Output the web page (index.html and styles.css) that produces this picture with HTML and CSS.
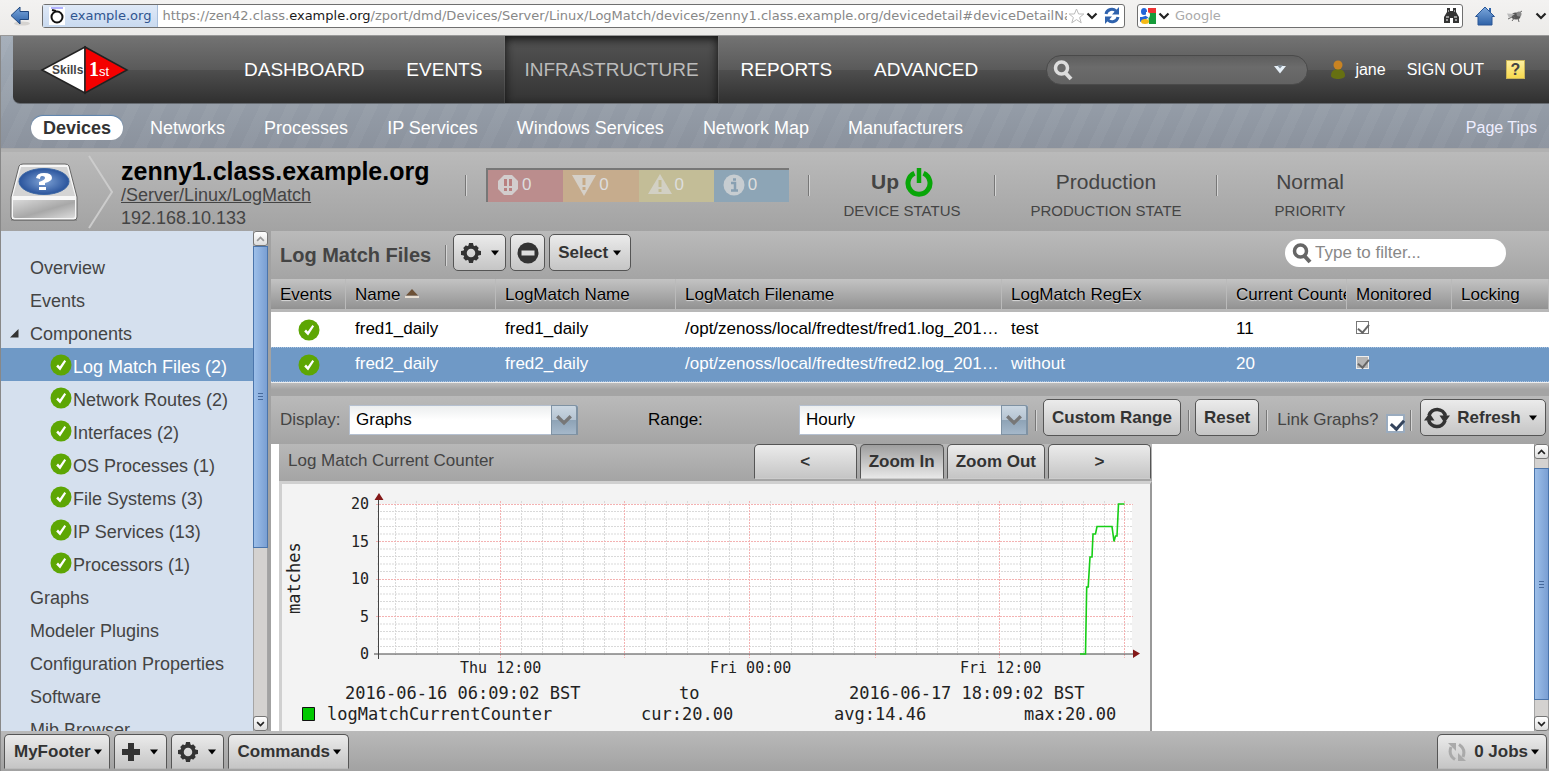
FILE: index.html
```html
<!DOCTYPE html>
<html lang="en">
<head>
<meta charset="utf-8">
<title>zenny1.class.example.org</title>
<link rel="stylesheet" href="styles.css">
</head>
<body>
<svg width="0" height="0" class="defs" aria-hidden="true">
  <defs>
    <linearGradient id="blue" x1="0" y1="0" x2="0" y2="1"><stop offset="0" stop-color="#7ba7dc"/><stop offset="1" stop-color="#2e62a8"/></linearGradient>
    <radialGradient id="disc"><stop offset="0" stop-color="#7fa3d6"/><stop offset="1" stop-color="#2a549c"/></radialGradient>
    <linearGradient id="front" x1="0" y1="0" x2="1" y2="1"><stop offset="0" stop-color="#d9d9d9"/><stop offset="0.55" stop-color="#a8a8a8"/><stop offset="1" stop-color="#dcdcdc"/></linearGradient>
    <symbol id="ok" viewBox="0 0 22 22"><circle cx="11" cy="11" r="10.5" fill="#5da604"/><path d="M6.2 12.4 8 10.600l1.800 1.900 4.600-6.400 1.700 1.100-6 9.300z" fill="#fff"/></symbol>
    <symbol id="gear" viewBox="0 0 22 22"><g fill="#333"><path d="M9 1h4l.6 3h-5.2zM9 21h4l.6-3h-5.2zM1 9v4l3 .6V8.400zM21 9v4l-3 .6V8.400z"/><path d="m3.200 5.900 2.700-2.700 2.600 1.700-3.600 3.600zM18.800 5.900l-2.700-2.700-2.600 1.700 3.600 3.600zM3.200 16.100l2.700 2.700 2.600-1.700-3.600-3.600zM18.800 16.100l-2.700 2.700-2.600-1.700 3.600-3.600z"/></g><circle cx="11" cy="11" r="6" fill="none" stroke="#333" stroke-width="3.500"/></symbol>
    <symbol id="lens" viewBox="0 0 22 22"><circle cx="9.500" cy="9" r="6" fill="none" stroke="currentColor" stroke-width="3.500"/><path d="m13.500 14 5.500 6" stroke="currentColor" stroke-width="4"/></symbol>
    <symbol id="caret" viewBox="0 0 10 6"><path d="M1 .5h8L5 5.500z" fill="#000"/></symbol>
    <symbol id="chev" viewBox="0 0 12 8"><path d="m1.500 1.500 4.500 4.500 4.500-4.500" fill="none" stroke="currentColor" stroke-width="2.200"/></symbol>
    <symbol id="cycle" viewBox="0 0 26 22"><path d="M5 8.500A8.500 8.500 0 0 1 21.400 9M21 13.500A8.500 8.500 0 0 1 4.600 13" fill="none" stroke="currentColor" stroke-width="3.600"/><path d="M0 13.500 5.500 6l5 7.500zM26 8.500 20.500 16l-5-7.500z" fill="currentColor"/></symbol>
  </defs>
</svg>

<div class="browser">
  <button class="plain back" aria-label="Back"><svg width="20" height="20" viewBox="0 0 20 20"><ellipse cx="12" cy="17.500" rx="8" ry="2" fill="#d5d3d0"/><path d="M1 9.500 10 1v4.500h8.500v8H10V18z" fill="url(#blue)" stroke="#1f477f"/></svg></button>
  <div class="address">
    <span class="site"><svg width="16" height="18" viewBox="0 0 16 18"><path d="M0 0h16v18H0z" fill="#fff"/><path d="M2 1h12" stroke="#66f"/><circle cx="8" cy="10" r="5.500" fill="none" stroke="#111" stroke-width="2"/><path d="m3 3 4 1" stroke="#111" stroke-width="2"/></svg>example.org</span>
    <span class="url">https://zen42.class.<b>example.org</b>/zport/dmd/Devices/Server/Linux/LogMatch/devices/zenny1.class.example.org/devicedetail#deviceDetailNav</span>
    <svg width="17" height="16" viewBox="0 0 17 16"><path d="m8.500 1 2.100 5h5.200l-4.200 3.500 1.600 5.300-4.700-3.200-4.700 3.200 1.600-5.300L1.200 6h5.200z" fill="#fff" stroke="#bbb"/></svg>
    <svg class="dark" width="12" height="8"><use href="#chev"/></svg>
    <svg class="reload" width="16" height="17" viewBox="0 0 16 17"><path d="M2 7C3 2 9 1 12 4M14 10c-1 5-7 6-10 3" fill="none" stroke="#2f62ad" stroke-width="3"/><path d="M15 0v7.500H8zM1 17V9.500h7z" fill="#2f62ad"/></svg>
  </div>
  <div class="websearch">
    <svg width="16" height="16" viewBox="0 0 16 16"><path d="M8 0h8v5H8z" fill="#e33"/><path d="M8 5h8v11H9z" fill="#169b3a"/><ellipse cx="4" cy="3.500" rx="3" ry="3.500" fill="#2465d8"/><path d="M0 9h2l6-2v3l-6 3-2 1z" fill="#2465d8"/><path d="M6 4c4 0 5 2 3 6L6 8z" fill="#fff"/><ellipse cx="5" cy="13.500" rx="4" ry="2.500" fill="#f5b915"/></svg>
    <svg class="dark" width="12" height="8"><use href="#chev"/></svg>
    <input type="text" placeholder="Google" aria-label="Web search">
    <svg width="17" height="16" viewBox="0 0 17 16"><path d="M4 0h3v3h3V0h3v4l3 5v6h-6v-5H7v5H1V9l3-5z" fill="#333"/><path d="M3 9h3M11 9h3M3 12h2M12 12h2M5 3h1M11 3h1" stroke="#bbb" stroke-width="1.500"/></svg>
  </div>
  <svg width="20" height="20" viewBox="0 0 20 20"><path d="M14 2h2v4h-2z" fill="#2e62a8"/><path d="m10 1 9.500 9.500H17V19H3v-8.500H.500z" fill="url(#blue)" stroke="#2b5796"/></svg>
  <svg class="fly" width="16" height="16" viewBox="0 0 16 16"><ellipse cx="9" cy="8" rx="4.500" ry="3.500" fill="#555"/><path d="m1 11 6-3M5 13l3-4M12 5l3-2M11 10l1 4" stroke="#666"/><path d="M0 5.500 8 6l-6 4z" fill="#bbb"/><circle cx="12" cy="6" r="2.500" fill="#888"/></svg>
  <svg class="dark" width="12" height="8"><use href="#chev"/></svg>
</div>

<div class="app">
<header class="top">
  <div class="mainbar">
    <svg class="logo" width="90" height="50" viewBox="0 0 90 50"><path d="M2 25 45 2v46z" fill="#fff" stroke="#222" stroke-width="1.500"/><path d="M45 2 87 25 45 48z" fill="#f40000" stroke="#222" stroke-width="1.500"/><text x="12" y="29" class="logo-a">Skills</text><text x="49" y="31" class="logo-b">1</text><text x="59" y="31" class="logo-c">st</text></svg>
    <nav class="primary">
      <a href="#">DASHBOARD</a><a href="#">EVENTS</a><a href="#" class="current">INFRASTRUCTURE</a><a href="#">REPORTS</a><a href="#">ADVANCED</a>
    </nav>
    <div class="globalsearch">
      <svg width="22" height="22"><use href="#lens"/></svg>
      <input type="text" aria-label="Search">
      <svg width="12" height="9" viewBox="0 0 12 9"><path d="M0 1h12L6 8.500z" fill="#e6f0f8"/><path d="m3 0 3 3.500L9 0z" fill="#7f8a94"/></svg>
    </div>
    <svg class="person" width="16" height="20" viewBox="0 0 16 20"><path d="M1 16c0-5 3-7 7-7s7 2 7 7c-1 4-13 4-14 0z" fill="#667012"/><circle cx="8" cy="5" r="4.500" fill="#c98322"/></svg>
    <a href="#" class="user">jane</a>
    <a href="#" class="signout">SIGN OUT</a>
    <button class="plain help" aria-label="Help">?</button>
  </div>
  <nav class="secondary">
    <a href="#" class="current">Devices</a><a href="#">Networks</a><a href="#">Processes</a><a href="#">IP Services</a><a href="#">Windows Services</a><a href="#">Network Map</a><a href="#">Manufacturers</a>
    <a href="#" class="tips">Page Tips</a>
  </nav>
</header>

<section class="device">
  <svg class="drive" width="76" height="60" viewBox="0 0 76 60"><path d="M5 54h66v4H5z" fill="#8d8d8d"/><path d="M13 3Q14 1 17 1h42q3 0 4 2l8 31v20q0 3-3 3H8q-3 0-3-3V34z" fill="#f7f7f7" stroke="#666"/><path d="M15 4h46l8 29H7z" fill="#d4d4d4"/><path d="M7 37h62v16q0 2-2 2H9q-2 0-2-2z" fill="url(#front)"/><ellipse cx="38" cy="18.500" rx="25" ry="13" fill="url(#disc)" stroke="#3b66a4"/><path d="M30 15q1-5 8-5 8 0 8 5 0 3-7 5v2h-6v-3q6-2 6-4 0-2-3-2-2 0-2 3zM33 24h7v3h-7z" fill="#fff"/></svg>
  <svg class="arrow" width="26" height="74" viewBox="0 0 26 74"><path d="M1 1 24 37 1 73" fill="none" stroke="#ccc" stroke-width="2"/></svg>
  <div class="identity">
    <h1>zenny1.class.example.org</h1>
    <a href="#">/Server/Linux/LogMatch</a>
    <div>192.168.10.133</div>
  </div>
  <i class="rule"></i>
  <div class="severity">
    <span class="critical"><svg width="22" height="22" viewBox="0 0 22 22"><path d="M7 1h8l6 6v8l-6 6H7l-6-6V7z" fill="#d2cdcd"/><path d="M8.500 5v7M13.500 5v7M8.500 14v3M13.500 14v3" stroke="#b98080" stroke-width="3"/></svg>0</span>
    <span class="error"><svg width="24" height="22" viewBox="0 0 24 22"><path d="M0 1h24L12 22z" fill="#d5d0c8"/><path d="M12 4v7M12 13v3" stroke="#c6a986" stroke-width="3"/></svg>0</span>
    <span class="warning"><svg width="24" height="22" viewBox="0 0 24 22"><path d="M12 0 24 20H0z" fill="#d2d0c4"/><path d="M12 6v7M12 15v3" stroke="#c2bb91" stroke-width="3"/></svg>0</span>
    <span class="info"><svg width="22" height="22" viewBox="0 0 22 22"><circle cx="11" cy="11" r="10.500" fill="#c7cdd1"/><path d="M8 9h4v7M8 16.500h7M10 5.500h3" fill="none" stroke="#88a0b2" stroke-width="2.500"/></svg>0</span>
  </div>
  <i class="rule"></i>
  <div class="fact status"><strong>Up <svg width="28" height="30" viewBox="0 0 28 30"><path d="M9.500 6.200a11 11 0 1 0 9 0" fill="none" stroke="#08a608" stroke-width="5"/><path d="M14 1v15" stroke="#08a608" stroke-width="4.500"/></svg></strong><small>DEVICE STATUS</small></div>
  <i class="rule"></i>
  <div class="fact state"><span>Production</span><small>PRODUCTION STATE</small></div>
  <i class="rule"></i>
  <div class="fact priority"><span>Normal</span><small>PRIORITY</small></div>
</section>

<div class="workspace">
  <nav class="tree">
    <a href="#">Overview</a>
    <a href="#">Events</a>
    <a href="#" class="parent"><svg width="10" height="10" viewBox="0 0 10 10"><path d="M0 8.500 8.500 0v8.500z" fill="#333"/></svg>Components</a>
    <a href="#" class="child selected"><svg width="22" height="22"><use href="#ok"/></svg>Log Match Files (2)</a>
    <a href="#" class="child"><svg width="22" height="22"><use href="#ok"/></svg>Network Routes (2)</a>
    <a href="#" class="child"><svg width="22" height="22"><use href="#ok"/></svg>Interfaces (2)</a>
    <a href="#" class="child"><svg width="22" height="22"><use href="#ok"/></svg>OS Processes (1)</a>
    <a href="#" class="child"><svg width="22" height="22"><use href="#ok"/></svg>File Systems (3)</a>
    <a href="#" class="child"><svg width="22" height="22"><use href="#ok"/></svg>IP Services (13)</a>
    <a href="#" class="child"><svg width="22" height="22"><use href="#ok"/></svg>Processors (1)</a>
    <a href="#">Graphs</a>
    <a href="#">Modeler Plugins</a>
    <a href="#">Configuration Properties</a>
    <a href="#">Software</a>
    <a href="#">Mib Browser</a>
  </nav>
  <div class="scroll tree-scroll">
    <span class="step idle"><svg width="9" height="6" viewBox="0 0 12 8"><path d="m1.500 6.500 4.500-4.500 4.500 4.500" fill="none" stroke="currentColor" stroke-width="2.200"/></svg></span>
    <span class="thumb"></span><span class="rest"></span>
    <span class="step"><svg width="9" height="6"><use href="#chev"/></svg></span>
  </div>

  <main>
    <div class="toolbar list-tools">
      <h2>Log Match Files</h2><i class="rule"></i>
      <button aria-label="Settings"><svg width="22" height="22"><use href="#gear"/></svg><svg width="10" height="6"><use href="#caret"/></svg></button>
      <button aria-label="Delete"><svg width="22" height="22" viewBox="0 0 22 22"><circle cx="11" cy="11" r="10.500" fill="#333"/><path d="M4.500 8.500h13v5h-13z" fill="#ddd"/></svg></button>
      <button>Select<svg width="10" height="6"><use href="#caret"/></svg></button>
      <label class="filter"><svg width="22" height="22"><use href="#lens"/></svg><input type="text" placeholder="Type to filter..." aria-label="Filter"></label>
    </div>
    <table>
      <colgroup><col class="c1"><col class="c2"><col class="c3"><col class="c4"><col class="c5"><col class="c6"><col class="c7"><col></colgroup>
      <thead><tr><th>Events</th><th>Name <svg width="14" height="9" viewBox="0 0 14 9"><path d="M1 6.500 7 0l6 6.500z" fill="#6d5136"/><path d="M0 8h14" stroke="#e8dfd3" stroke-width="2"/></svg></th><th>LogMatch Name</th><th>LogMatch Filename</th><th>LogMatch RegEx</th><th>Current Counter</th><th>Monitored</th><th>Locking</th></tr></thead>
      <tbody>
        <tr><td class="state-icon"><svg width="22" height="22"><use href="#ok"/></svg></td><td>fred1_daily</td><td>fred1_daily</td><td>/opt/zenoss/local/fredtest/fred1.log_201…</td><td>test</td><td>11</td><td><input type="checkbox" checked aria-label="fred1_daily monitored"></td><td></td></tr>
        <tr class="picked"><td class="state-icon"><svg width="22" height="22"><use href="#ok"/></svg></td><td>fred2_daily</td><td>fred2_daily</td><td>/opt/zenoss/local/fredtest/fred2.log_201…</td><td>without</td><td>20</td><td><input type="checkbox" checked aria-label="fred2_daily monitored"></td><td></td></tr>
      </tbody>
    </table>
    <div class="splitter"></div>
    <div class="toolbar graph-tools">
      <label class="display" for="display">Display:</label>
      <span class="combo"><select id="display"><option>Graphs</option></select><span class="trigger"><svg width="18" height="12"><use href="#chev"/></svg></span></span>
      <label class="range" for="range">Range:</label>
      <span class="combo"><select id="range"><option>Hourly</option></select><span class="trigger"><svg width="18" height="12"><use href="#chev"/></svg></span></span>
      <i class="rule"></i><button>Custom Range</button><i class="rule"></i><button>Reset</button><i class="rule"></i>
      <label class="link" for="link">Link Graphs?</label><input class="tick" type="checkbox" id="link" checked><i class="rule"></i>
      <button class="refresh"><svg width="26" height="22"><use href="#cycle"/></svg>Refresh<svg width="10" height="6"><use href="#caret"/></svg></button>
    </div>
    <div class="graphs">
      <section class="graph">
        <div class="graph-head"><h3>Log Match Current Counter</h3>
          <button class="wide">&lt;</button><button class="on">Zoom In</button><button>Zoom Out</button><button class="wide">&gt;</button></div>
        <div class="plot">
          <svg width="868" height="262" viewBox="282 484 868 262" id="chart" role="img" aria-label="Log match counter">
            <path d="M379 504h753v150H379z" fill="#fff"/>
            <path class="minor" d="M377 646.500h755M377 639h755M377 631.500h755M377 624h755M377 609h755M377 601.500h755M377 594h755M377 586.500h755M377 571.500h755M377 564h755M377 556.500h755M377 549h755M377 534h755M377 526.500h755M377 519h755M377 511.500h755"/>
            <path class="minor" d="M395.500 501v154M416.500 501v154M437.500 501v154M458.500 501v154M479.500 501v154M521.500 501v154M542.500 501v154M562.500 501v154M583.500 501v154M604.500 501v154M645.500 501v154M666.500 501v154M687.500 501v154M708.500 501v154M729.500 501v154M770.500 501v154M791.500 501v154M812.500 501v154M833.500 501v154M854.500 501v154M895.500 501v154M916.500 501v154M937.500 501v154M957.500 501v154M978.500 501v154M1020.500 501v154M1041.500 501v154M1062.500 501v154M1083.500 501v154M1104.500 501v154"/>
            <path class="major" d="M376 504.500h757M376 541.500h757M376 579.500h757M376 616.500h757M500.500 501v157M624.500 501v157M749.500 501v157M875.500 501v157M999.500 501v157M1124.500 501v157"/>
            <path d="M378.500 659V498M374 654h760" fill="none" stroke="#444"/>
            <path d="m374.500 500 4.500-7 4.500 7zM1133 649.500l7 4-7 4.500z" fill="#831818"/>
            <path d="M1080 654h5.500l1.200-67h1.500l1.800-30h2l1-23h2.500l1.500-7.500h15l2 15 1.500-5.500h1.500l1.500-32h6" fill="none" stroke="#16ce16" stroke-width="1.600"/>
            <g class="axis"><text x="351" y="509">20</text><text x="351" y="547">15</text><text x="351" y="584">10</text><text x="360" y="622">5</text><text x="360" y="659">0</text><text x="460" y="673">Thu 12:00</text><text x="710" y="673">Fri 00:00</text><text x="960" y="673">Fri 12:00</text></g>
            <g class="legend"><text transform="translate(300 614) rotate(-90)">matches</text><text x="345" y="699">2016-06-16 06:09:02 BST</text><text x="679" y="699">to</text><text x="849" y="699">2016-06-17 18:09:02 BST</text><text x="327" y="720">logMatchCurrentCounter</text><text x="641" y="720">cur:20.00</text><text x="834" y="720">avg:14.46</text><text x="1024" y="720">max:20.00</text></g>
            <path d="M302.500 707.500h12v13h-12z" fill="#00c800" stroke="#111"/>
          </svg>
        </div>
      </section>
      <div class="scroll graph-scroll">
        <span class="step"><svg width="9" height="6" viewBox="0 0 12 8"><path d="m1.500 6.500 4.500-4.500 4.500 4.500" fill="none" stroke="currentColor" stroke-width="2.200"/></svg></span>
        <span class="lead"></span><span class="thumb"></span><span class="rest"></span>
        <span class="step"><svg width="9" height="6"><use href="#chev"/></svg></span>
      </div>
    </div>
  </main>
</div>

<footer>
  <button>MyFooter<svg width="10" height="6"><use href="#caret"/></svg></button>
  <button aria-label="Add"><svg width="20" height="20" viewBox="0 0 20 20"><path d="M7 1h6v6h6v6h-6v6H7v-6H1V7h6z" fill="#333"/></svg><svg width="10" height="6"><use href="#caret"/></svg></button>
  <button aria-label="Settings"><svg width="22" height="22"><use href="#gear"/></svg><svg width="10" height="6"><use href="#caret"/></svg></button>
  <button>Commands<svg width="10" height="6"><use href="#caret"/></svg></button>
  <button class="jobs"><svg width="20" height="20" viewBox="0 0 20 20"><path d="M8 17.500Q1 13 4 5M12 2.500q7 4.500 4 12.500" fill="none" stroke="#aaa" stroke-width="3"/><path d="M1 1h8v8zM19 19h-8v-8z" fill="#aaa"/></svg>0 Jobs<svg width="10" height="6"><use href="#caret"/></svg></button>
</footer>
</div>
</body>
</html>
```

FILE: styles.css
```css
* { box-sizing: border-box; }
body { margin: 0; height: 100vh; display: flex; flex-direction: column; background: #fff; font: 17px/20px "Liberation Sans", Arial, sans-serif; color: #444; overflow: hidden; }
a { color: inherit; text-decoration: none; }
svg { flex: none; display: block; }
h1, h2, h3 { margin: 0; }
input, select, button { font: inherit; color: inherit; margin: 0; }
.defs { position: absolute; }
.plain { border: 0; padding: 0; background: none; }

.browser { flex: none; height: 36px; display: flex; align-items: center; gap: 12px; padding: 0 2px 4px 10px; background: linear-gradient(#f3f2f1, #ecebe9); border-bottom: 1px solid #999; font: 13px/20px "DejaVu Sans", sans-serif; color: #888; }
.browser .dark { color: #222; }
.address, .websearch { height: 24px; display: flex; align-items: center; background: #fff; border: 1px solid #6f6f6f; border-radius: 3px; }
.address { flex: 1; min-width: 0; gap: 1px; padding-right: 4px; }
.site { align-self: stretch; display: flex; align-items: center; gap: 5px; padding: 0 6px; background: linear-gradient(#dfe9f7, #c9daf0); border-right: 1px solid #a9bfdc; color: #2f5590; }
.url { flex: 1; min-width: 0; overflow: hidden; white-space: nowrap; padding-left: 3px; }
.url b { font-weight: normal; color: #1a1a1a; }
.reload { margin-left: 5px; }
.websearch { width: 326px; padding: 0 2px; gap: 2px; }
.websearch input { flex: 1; min-width: 0; border: 0; outline: 0; padding: 0 3px; background: none; }
.websearch input::placeholder { color: #aaa; opacity: 1; }

.app { flex: 1; min-height: 0; display: flex; flex-direction: column; margin-bottom: 4px; border-left: 1px solid #888; }
.top { flex: none; background: repeating-linear-gradient(115deg, rgba(255,255,255,.04) 0 11px, transparent 11px 24px), linear-gradient(#a3adb8, #8b929d); color: #fff; border-bottom: 1px solid #aaa; }
.mainbar { height: 68px; margin-left: 12px; padding: 0 24px 0 27px; display: flex; align-items: center; background: linear-gradient(#737373, #5a5a5a 50%, #4e4e4e 51%, #303030); border-bottom: 1px solid #656a70; border-radius: 0 0 0 7px; font-size: 16px; }
.logo-a { font: bold 12px "Liberation Sans", sans-serif; fill: #444; }
.logo-b { font: bold 20px "Liberation Serif", serif; fill: #fff; }
.logo-c { font: 13px "Liberation Sans", sans-serif; fill: #fff; }
.primary { align-self: stretch; display: flex; gap: 4px; margin-left: 95px; font-size: 19px; }
.primary a { display: flex; align-items: center; padding: 0 19px; white-space: nowrap; }
.primary .current { color: #bbb; background: linear-gradient(#555, #333); box-shadow: inset 0 3px 10px #111, 0 0 1px #999; }
.globalsearch { display: flex; align-items: center; width: 262px; height: 30px; margin-left: auto; padding: 0 21px 0 5px; border: 1px solid #4a4a4a; border-radius: 15px; background: linear-gradient(#5e5e5e, #6b6b6b 40%, #636363); color: #ddd; }
.globalsearch input { flex: 1; min-width: 0; background: none; border: 0; outline: 0; }
.person { margin-left: 22px; }
.user { margin-left: 9px; }
.signout { margin: 0 22px 0 21px; white-space: nowrap; }
.help { width: 19px; height: 19px; background: linear-gradient(#fff0a0, #f7d94e); border: 1px solid #c9b458; color: #444; font-weight: bold; line-height: 17px; }
.secondary { height: 44px; display: flex; align-items: center; gap: 15px; padding: 3px 12px 0 30px; font-size: 18px; white-space: nowrap; }
.secondary a { padding: 2px 12px; }
.secondary .current { background: #fff; color: #333; font-weight: bold; border-radius: 12px; box-shadow: 0 -1px 1px #5b83ae; }
.secondary .tips { margin-left: auto; padding: 0; font-size: 16px; color: #eef; }

.device { flex: none; height: 82px; display: flex; align-items: center; background: linear-gradient(#bababa, #a3a3a3); border-top: 3px solid #b1b1b1; }
.drive { margin: 2px 0 0 5px; }
.arrow { margin-left: 6px; }
.identity { width: 344px; margin: 4px 0 0 7px; font-size: 18px; line-height: 23px; }
.identity h1 { font-size: 25px; line-height: 26px; color: #000; }
.identity a { text-decoration: underline; }
.rule { flex: none; width: 2px; height: 21px; border-left: 1px solid #777; border-right: 1px solid #d5d5d5; }
.device .rule { margin-bottom: 13px; }
.severity { display: flex; width: 303px; height: 34px; margin: 0 19px 13px; border: solid #777; border-width: 2px 0 0 2px; color: #ddd; }
.severity span { flex: 1; display: flex; align-items: center; gap: 3px; padding: 0 0 2px 9px; }
.critical { background: #bb8d8d; }
.error { background: #c6ac8d; }
.warning { background: #c3bd97; }
.info { background: #8da5b6; }
.fact { display: flex; flex-direction: column; align-items: center; height: 58px; margin-top: 8px; font-size: 21px; line-height: 30px; }
.fact strong { display: flex; align-items: center; gap: 6px; }
.fact small { font-size: 15px; line-height: 28px; }
.status, .priority { width: 184px; }
.state { width: 220px; }

.workspace { flex: 1; min-height: 0; display: flex; }
.tree { flex: none; width: 252px; overflow: hidden; padding-top: 18px; background: #d5e0ee; font-size: 18px; }
.tree a { display: flex; align-items: center; height: 33px; padding: 5px 0 0 29px; white-space: nowrap; }
.tree .parent { padding-left: 9px; gap: 10px; }
.tree .child { padding: 6px 0 0 49px; align-items: flex-start; line-height: 26px; }
.tree .child svg { margin-right: 1px; }
.tree .selected { background: #6f99c6; color: #fff; }
.scroll { flex: none; width: 15px; display: flex; flex-direction: column; background: #d4d2d0; color: #222; border: solid #a5a5a5; border-width: 0 1px; }
.step { flex: none; height: 15px; display: flex; align-items: center; justify-content: center; margin: 0 -1px; background: linear-gradient(#fff, #ddd); border: 1px solid #777; border-radius: 3px; }
.idle { color: #999; }
.thumb { display: flex; margin: 0 -1px; background: linear-gradient(#46699b, #46699b) center/5px 1px no-repeat, linear-gradient(#46699b, #46699b) center calc(50% - 3px)/5px 1px no-repeat, linear-gradient(#46699b, #46699b) center calc(50% + 3px)/5px 1px no-repeat, linear-gradient(90deg, #9dbfe9, #7a9fd3); border: 1px solid #4b75ab; }
.tree-scroll .thumb { flex: 301; }
.tree-scroll .rest { flex: 169; }
.graph-scroll .lead { flex: 9; }
.graph-scroll .thumb { flex: 232; }
.graph-scroll .rest { flex: 16; }

main { flex: 1; min-width: 0; display: flex; flex-direction: column; border-left: 3px solid #a2a2a2; }
.toolbar { flex: none; height: 48px; display: flex; align-items: center; background: linear-gradient(#bababa, #a4a4a4); white-space: nowrap; }
.toolbar h2 { font-size: 20px; margin: 4px 10px 0 0; }
button:not(.plain) { display: flex; align-items: center; justify-content: center; gap: 6px; height: 37px; padding: 0 8px; background: linear-gradient(#ebebeb, #c5c5c5); border: 1px solid #555; border-radius: 5px; color: #333; font-weight: bold; white-space: nowrap; }
.list-tools { padding: 0 43px 5px 9px; gap: 4px; }
.list-tools .rule { margin: 6px 2px 0 0; }
.list-tools button:not(.plain) { gap: 4px; }
.list-tools button[aria-label="Settings"] { width: 53px; gap: 8px; padding: 0 5px; }
.list-tools button[aria-label="Delete"] { width: 35px; padding: 0; }
.filter { display: flex; align-items: center; width: 221px; height: 28px; margin-left: auto; padding: 0 6px; background: #fff; border-radius: 14px; color: #666; }
.filter input { flex: 1; min-width: 0; border: 0; outline: 0; background: none; padding: 0 2px; }
.filter input::placeholder { color: #888; opacity: 1; }

table { width: 100%; table-layout: fixed; border-collapse: separate; border-spacing: 0; color: #000; background: #fff; border-bottom: 1px solid #eee; }
.c1 { width: 75px; } .c2 { width: 150px; } .c3 { width: 180px; } .c4 { width: 326px; } .c5 { width: 225px; } .c6 { width: 120px; } .c7 { width: 105px; }
th, td { padding: 0 0 0 9px; text-align: left; overflow: hidden; white-space: nowrap; }
th { height: 33px; padding-top: 2px; font-weight: normal; background: linear-gradient(#c3c3c3, #929292); border-bottom: 3px solid #b8b8b8; border-right: 1px solid #bababa; text-shadow: 0 1px 1px #ddd; }
th svg { display: inline-block; vertical-align: 2px; }
td { height: 35px; padding-bottom: 2px; }
.picked td { background: #6f99c6; color: #fff; border: dotted #a9c4e2; border-width: 1px 0; }
td.state-icon { padding: 0 0 0 27px; }
td input { display: block; appearance: none; width: 13px; height: 13px; margin-bottom: 3px; border: 1px solid #777; position: relative; }
.picked input { background: #b5b5b5; border-color: #eee; }
td input::after { content: ""; position: absolute; left: 3px; top: 0; width: 5px; height: 9px; border: solid #666; border-width: 0 2px 2px 0; transform: rotate(40deg); }
.splitter { flex: none; height: 13px; background: linear-gradient(#bcbcbc, #a4a4a4 50%); }

.graph-tools { padding: 0 3px 0 9px; }
.graph-tools button { margin-bottom: 5px; }
.graph-tools .rule { margin: 0 6px 0 7px; }
.graph-tools button + .rule { margin: 0 5px 0 7px; }
.display { flex: none; width: 69px; }
.range { flex: none; width: 151px; margin-left: 70px; color: #000; }
.combo { position: relative; flex: none; width: 229px; height: 30px; }
.combo select { width: 100%; height: 100%; appearance: none; padding: 0 30px 0 6px; border: 1px solid #b5c0d0; border-radius: 0; background: linear-gradient(#eceeef, #fff 50%); color: #000; }
.trigger { position: absolute; right: 0; top: 0; width: 27px; height: 30px; display: flex; align-items: center; justify-content: center; background: linear-gradient(#cbd7e2, #b5c4d2 50%, #8ea3b6 51%, #a5b8ca); border: solid #7f92a3; border-width: 1px 2px 1px 1px; color: #777; pointer-events: none; border-radius: 0 3px 0 0; }
.link { flex: none; margin: 0 8px 0 4px; }
.tick { flex: none; appearance: none; width: 19px; height: 19px; margin-top: 7px; background: #fff; border: 2px solid #9aabbe; position: relative; }
.tick::after { content: ""; position: absolute; left: 5px; top: 1px; width: 6px; height: 10px; border: solid #34445c; border-width: 0 3px 3px 0; transform: rotate(42deg); }
.graph-tools .tick + .rule { margin: 0 0 0 5px; }
.graph-tools .refresh:not(.plain) { width: 126px; padding: 0 7px 0 3px; gap: 7px; margin-left: auto; }

.graphs { flex: 1; min-height: 0; display: flex; justify-content: space-between; padding-left: 8px; background: #fff; overflow: hidden; }
.graph { flex: none; }
.graph-head { display: flex; align-items: flex-start; gap: 3px; height: 37px; padding: 0 1px 0 9px; background: linear-gradient(#b8b8b8, #a4a4a4); }
.graph-head h3 { flex: 1; font-size: 17px; line-height: 34px; font-weight: normal; }
.graph-head button:not(.plain) { height: 35px; border-radius: 5px 5px 0 0; border-bottom-color: #ccc; }
.graph-head .wide { width: 103px; }
.graph-head .on:not(.plain) { background: linear-gradient(#9e9e9e, #e8e8e8); }
.plot { background: #f3f3f3; border: solid #d0d0d0; border-width: 3px 2px 0 3px; border-right-color: #999; }
.minor { fill: none; stroke: #d9d9d9; stroke-dasharray: 2 1; }
.major { fill: none; stroke: #f4b2b2; stroke-dasharray: 2 1; }
.axis text { font: 15px "DejaVu Sans Mono", monospace; fill: #222; }
.legend text { font: 17px "DejaVu Sans Mono", monospace; fill: #222; }

footer { flex: none; height: 40px; display: flex; gap: 4px; padding: 3px 2px 0 3px; background: linear-gradient(#b9b9b9, #a2a2a2); }
footer button:not(.plain) { height: 35px; border-radius: 5px 5px 0 0; border-bottom-color: #bbb; gap: 2px; padding: 0 6px 0 9px; }
footer button[aria-label]:not(.plain) { width: 53px; gap: 8px; padding: 0 5px; }
footer .jobs { margin-left: auto; }
footer .jobs svg:first-child { margin-right: 5px; }
```
